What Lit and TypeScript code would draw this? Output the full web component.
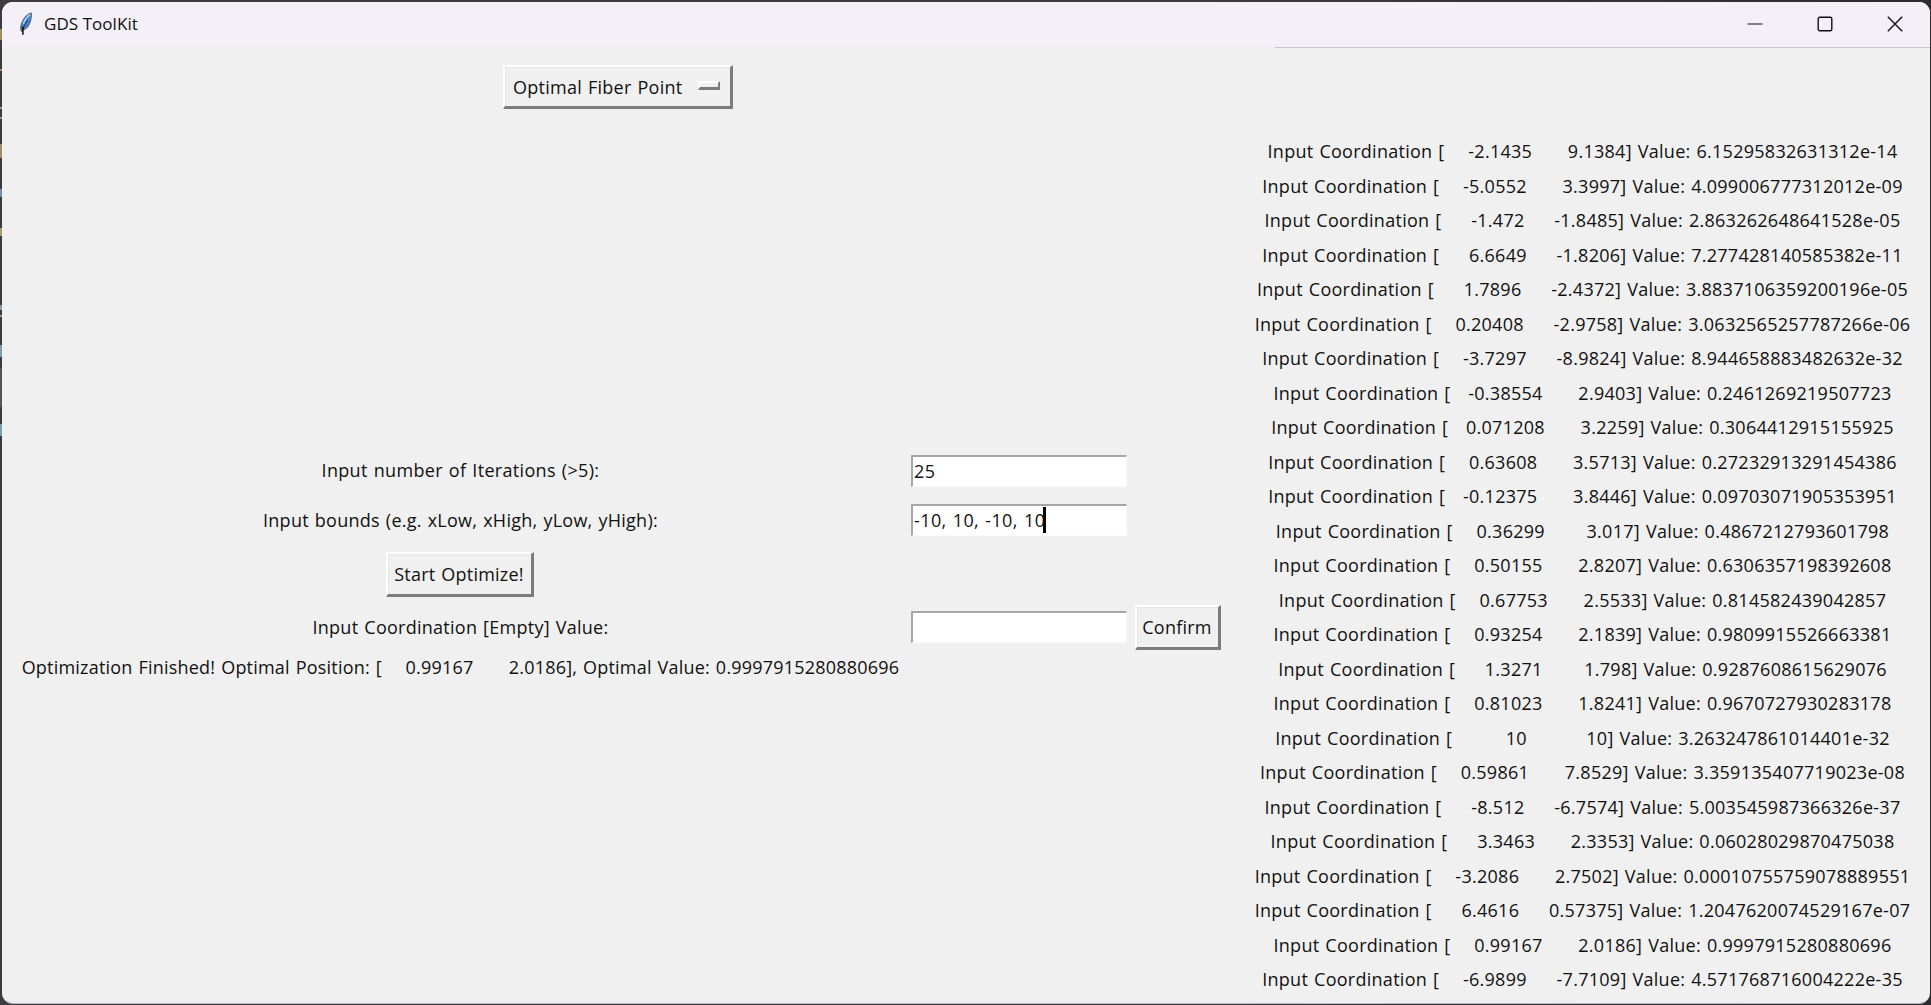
import { LitElement, html, css, svg } from "lit";
import { customElement, state } from "lit/decorators.js";

type Sample = [x: string, y: string, value: string];

const SAMPLES: Sample[] = [
  ["-2.1435", "9.1384", "6.15295832631312e-14"],
  ["-5.0552", "3.3997", "4.099006777312012e-09"],
  ["-1.472", "-1.8485", "2.863262648641528e-05"],
  ["6.6649", "-1.8206", "7.277428140585382e-11"],
  ["1.7896", "-2.4372", "3.8837106359200196e-05"],
  ["0.20408", "-2.9758", "3.0632565257787266e-06"],
  ["-3.7297", "-8.9824", "8.944658883482632e-32"],
  ["-0.38554", "2.9403", "0.2461269219507723"],
  ["0.071208", "3.2259", "0.3064412915155925"],
  ["0.63608", "3.5713", "0.27232913291454386"],
  ["-0.12375", "3.8446", "0.09703071905353951"],
  ["0.36299", "3.017", "0.4867212793601798"],
  ["0.50155", "2.8207", "0.6306357198392608"],
  ["0.67753", "2.5533", "0.814582439042857"],
  ["0.93254", "2.1839", "0.9809915526663381"],
  ["1.3271", "1.798", "0.9287608615629076"],
  ["0.81023", "1.8241", "0.9670727930283178"],
  ["10", "10", "3.263247861014401e-32"],
  ["0.59861", "7.8529", "3.359135407719023e-08"],
  ["-8.512", "-6.7574", "5.003545987366326e-37"],
  ["3.3463", "2.3353", "0.06028029870475038"],
  ["-3.2086", "2.7502", "0.00010755759078889551"],
  ["6.4616", "0.57375", "1.2047620074529167e-07"],
  ["0.99167", "2.0186", "0.9997915280880696"],
  ["-6.9899", "-7.7109", "4.571768716004222e-35"],
];

/* Right-aligns both coordinates in fixed character fields. */
const vector = (x: string, y: string) => `[${x.padStart(11)}${y.padStart(12)}]`;

const feather = svg`
  <path d="M12.6.6C9.200 1 5.400 4.600 3.200 8.800 1.400 12.400.6 16 1.400 18.400L3 20.200 4.600 18.200C8 17 10.800 13.400 12 9.200 12.900 6 13.300 2.800 12.600.6Z" fill="#5d6675"/>
  <path d="M11.800 1.800C9.200 2.600 6.400 5.400 4.400 9.200 3 12 2.200 15 2.500 17.200L4.200 17.400C7.200 15.800 9.600 12.600 10.800 9 11.600 6.400 12.200 3.800 11.800 1.800Z" fill="#4389d8"/>
  <path d="M11.200 2.600C8.600 4 6.600 6.600 5.200 9.600L4.400 12" fill="none" stroke="#a9d3f5" stroke-width="1.500"/>
  <path d="M8.800 8C7.400 10.500 5.200 13.500 4.200 17" fill="none" stroke="#14284a" stroke-width="1"/>
  <path d="M3.900 14.500V22.800" stroke="#0b0b0f" stroke-width="1.500"/>`;

@customElement("title-bar")
export class TitleBar extends LitElement {
  static styles = css`
    :host {
      display: flex;
      align-items: center;
      height: 45px;
      flex: none;
      background: #f3f0f8;
      color: #111;
    }
    .icon { width: 15px; height: 24px; margin-left: 17px; margin-top: -2px; flex: none; }
    .name {
      flex: 1;
      margin-left: 10px;
      font: 17px/22px "Open Sans", sans-serif;
      letter-spacing: 0.05px;
      margin-top: -2px;
      white-space: nowrap;
    }
    .controls { display: flex; margin-top: -2px; }
    .control { width: 70px; height: 45px; display: flex; align-items: center; justify-content: center; }
    .glyph { width: 16px; height: 16px; fill: none; stroke: #111; stroke-width: 1.4; }
  `;

  render() {
    return html`
      <svg class="icon" viewBox="0 0 15 24">${feather}</svg>
      <div class="name">GDS ToolKit</div>
      <div class="controls">
        <div class="control"><svg class="glyph" viewBox="0 0 16 16"><path d="M.5 8H15.500" stroke-width="1.100"/></svg></div>
        <div class="control"><svg class="glyph" viewBox="0 0 16 16"><rect x="1.200" y="1.200" width="13.600" height="13.600" rx="1.500"/></svg></div>
        <div class="control"><svg class="glyph" viewBox="0 0 16 16"><path d="M.8.8 15.200 15.200M15.200.8.8 15.200"/></svg></div>
      </div>
    `;
  }
}

@customElement("app-root")
export class AppRoot extends LitElement {
  @state() private iterations = "25";
  @state() private bounds = "-10, 10, -10, 10";
  @state() private measured = "";

  static styles = css`
    :host {
      display: block;
      box-sizing: border-box;
      width: 1931px;
      height: 1005px;
      padding: 2px 1px 1px 2px;
      background:
        linear-gradient(#a58a60, #a58a60) 0 29px / 2px 11px no-repeat,
        linear-gradient(#a58a60, #a58a60) 0 69px / 2px 2px no-repeat,
        linear-gradient(#9a9a9a, #9a9a9a) 0 107px / 2px 2px no-repeat,
        linear-gradient(#9a9a9a, #9a9a9a) 0 117px / 2px 2px no-repeat,
        linear-gradient(#a58a70, #a58a70) 0 144px / 2px 14px no-repeat,
        linear-gradient(#6d8fb0, #6d8fb0) 0 189px / 2px 8px no-repeat,
        linear-gradient(#a89c70, #a89c70) 0 228px / 2px 8px no-repeat,
        linear-gradient(#8c99a6, #8c99a6) 0 305px / 2px 5px no-repeat,
        linear-gradient(#9a9a9a, #9a9a9a) 0 315px / 2px 2px no-repeat,
        linear-gradient(#7c9cb4, #7c9cb4) 0 345px / 2px 12px no-repeat,
        linear-gradient(#555557, #555557) 0 368px / 2px 39px no-repeat,
        linear-gradient(#7c9cb4, #7c9cb4) 0 424px / 2px 12px no-repeat,
        linear-gradient(90deg, #3c3c3e 0, #3c3c3e 1200px, #2c2c2e 1931px);
      overflow: hidden;
      color: #111;
      font: 18px/24px "Open Sans", "Noto Sans", sans-serif;
    }
    .window {
      display: flex;
      flex-direction: column;
      box-sizing: border-box;
      height: 1002px;
      border-radius: 11px;
      overflow: hidden;
      background: #f0f0f0;
      border-bottom: 1px solid #b9b9bb;
    }
    .divider { height: 1px; flex: none; margin-left: 1273px; background: #c8c5cf; }
    .body { display: flex; flex: 1; min-height: 0; }
    .left { width: 1226px; flex: none; }
    .text { white-space: pre; word-spacing: 1px; letter-spacing: 0.22px; }
    .raised {
      display: flex;
      align-items: center;
      justify-content: center;
      box-sizing: border-box;
      height: 45px;
      border: 2px solid;
      border-color: #fff #7c7c7c #7c7c7c #fff;
      border-right-width: 3px;
      border-bottom-width: 3px;
      box-shadow: inset 1px 1px #e6e6e6;
      background: #f0f0f0;
    }
    .menu { width: 230px; height: 44px; margin: 17px 0 0 501px; justify-content: flex-start; padding-left: 8px; }
    .option { letter-spacing: 0.26px; }
    .mark {
      width: 22px;
      height: 9px;
      margin-left: 16px;
      margin-top: -2px;
      box-sizing: border-box;
      border: 2px solid;
      border-color: #fff #7c7c7c #7c7c7c #fff;
      border-bottom-width: 3px;
    }
    .form {
      display: grid;
      grid-template-columns: 885px 232px 85px;
      grid-template-rows: 48px 50px 58px 47px 33px;
      margin: 338px 0 0 16px;
      align-items: center;
      justify-items: center;
    }
    .start { width: 148px; grid-column: 1; margin-right: 2px; }
    .row-label { grid-column: 1; }
    .iter { letter-spacing: 0.32px; padding-bottom: 2px; }
    .bounds { letter-spacing: 0.26px; }
    .coord { letter-spacing: 0.26px; }
    .result { letter-spacing: 0.21px; }
    .entry {
      display: flex;
      align-items: center;
      box-sizing: border-box;
      width: 216px;
      height: 32px;
      padding: 0 0 2px 1px;
      background: #fff;
      border-top: 2px solid #a6a6a6;
      border-left: 2px solid #a6a6a6;
      border-right: 1px solid #fafafa;
      border-bottom: 1px solid #fafafa;
    }
    .entry .text { letter-spacing: 0.4px; }
    .caret { width: 3px; height: 26px; background: #000; margin-left: -2px; }
    .confirm { width: 86px; margin-top: 1px; }
    .log { flex: 1; display: flex; flex-direction: column; align-items: center; padding: 86px 0 0 7px; }
    .line { height: 34.500px; line-height: 34.500px; flex: none; letter-spacing: 0.27px; }
  `;

  render() {
    const best = SAMPLES[23];
    return html`
      <div class="window">
        <title-bar></title-bar>
        <div class="divider"></div>
        <div class="body">
          <div class="left">
            <div class="raised menu">
              <span class="text option">Optimal Fiber Point</span><span class="mark"></span>
            </div>
            <div class="form">
              <div class="text row-label iter">Input number of Iterations (>5):</div>
              <div class="entry"><span class="text">${this.iterations}</span></div>
              <div class="text row-label bounds">Input bounds (e.g. xLow, xHigh, yLow, yHigh):</div>
              <div class="entry"><span class="text">${this.bounds}</span><span class="caret"></span></div>
              <div class="raised start"><span class="text">Start Optimize!</span></div>
              <div class="text row-label coord">Input Coordination [Empty] Value:</div>
              <div class="entry"><span class="text">${this.measured}</span></div>
              <div class="raised confirm"><span class="text">Confirm</span></div>
              <div class="text row-label result">${`Optimization Finished! Optimal Position: ${vector(best[0], best[1])}, Optimal Value: ${best[2]}`}</div>
            </div>
          </div>
          <div class="log">
            ${SAMPLES.map(([x, y, v]) => html`<div class="text line">${`Input Coordination ${vector(x, y)} Value: ${v}`}</div>`)}
          </div>
        </div>
      </div>
    `;
  }
}
